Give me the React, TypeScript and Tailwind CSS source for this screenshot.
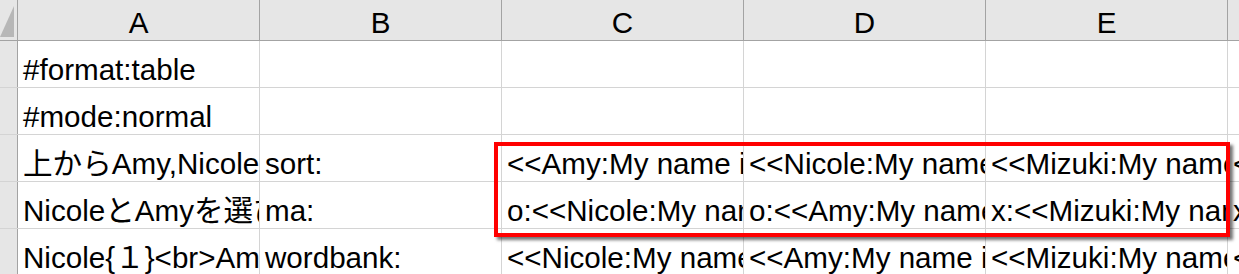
import React from 'react'

const font = { fontFamily: '"Liberation Sans", "Noto Sans CJK JP", sans-serif' }

const columns = ['A', 'B', 'C', 'D', 'E']

const rows: string[][] = [
  ['#format:table', '', '', '', '', ''],
  ['#mode:normal', '', '', '', '', ''],
  [
    '上からAmy,Nicole,Mizukiの順に並べましょう',
    'sort:',
    '<<Amy:My name is Amy.>>',
    '<<Nicole:My name is Nicole.>>',
    '<<Mizuki:My name is Mizuki.>>',
    '<<',
  ],
  [
    'NicoleとAmyを選びましょう',
    'ma:',
    'o:<<Nicole:My name is Nicole.>>',
    'o:<<Amy:My name is Amy.>>',
    'x:<<Mizuki:My name is Mizuki.>>',
    'x:',
  ],
  [
    'Nicole{１}<br>Amy{２}',
    'wordbank:',
    '<<Nicole:My name is Nicole.>>',
    '<<Amy:My name is Amy.>>',
    '<<Mizuki:My name is Mizuki.>>',
    '<<',
  ],
]

function Cell({ text, last }: { text: string; last?: boolean }) {
  return (
    <div
      className={
        last
          ? 'flex h-full min-w-0 flex-1 items-end overflow-hidden whitespace-nowrap pb-[1px] pl-[5px]'
          : 'flex h-full w-[242px] shrink-0 items-end overflow-hidden whitespace-nowrap border-r border-[#d4d4d4] pb-[1px] pl-[5px]'
      }
    >
      <span className="text-[29.6px] leading-[33px] text-black">{text}</span>
    </div>
  )
}

export default function App() {
  return (
    <div className="relative h-[274px] w-[1239px] overflow-hidden bg-white" style={font}>
      {/* column headers */}
      <div className="flex h-[41px] border-b border-[#a3a3a3] bg-[#e6e6e6]">
        <div className="flex h-full w-[18px] shrink-0 items-end border-r border-[#a3a3a3]">
          <svg width="17" height="40" viewBox="0 0 17 40">
            <polygon points="14,6 14,37 0,37" fill="#b7b7b7" />
          </svg>
        </div>
        {columns.map((c) => (
          <div
            key={c}
            className="flex h-full w-[242px] shrink-0 items-end justify-center border-r border-[#a3a3a3] pb-[1px]"
          >
            <span className="text-[29.6px] leading-[33px] text-black">{c}</span>
          </div>
        ))}
        <div className="flex-1" />
      </div>

      {rows.map((row, i) => (
        <div key={i} className="flex h-[47px] border-b border-[#d4d4d4]">
          <div className="h-full w-[18px] shrink-0 border-r border-[#a3a3a3] bg-[#e6e6e6]" />
          {row.map((t, j) => (
            <Cell key={j} text={t} last={j === row.length - 1} />
          ))}
        </div>
      ))}

      {/* red highlight box */}
      <div className="absolute left-[494px] top-[142px] h-[95px] w-[736px] border-4 border-[#ff0000] shadow-[3px_3px_3px_rgba(0,0,0,0.55)]" />
    </div>
  )
}
